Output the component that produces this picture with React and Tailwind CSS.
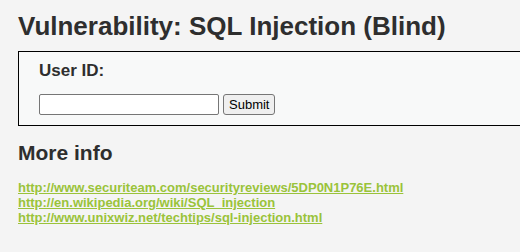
export default function App() {
  const links = [
    "http://www.securiteam.com/securityreviews/5DP0N1P76E.html",
    "http://en.wikipedia.org/wiki/SQL_injection",
    "http://www.unixwiz.net/techtips/sql-injection.html",
  ];

  return (
    <div className="w-[520px] h-[252px] overflow-hidden bg-[#f4f4f4] text-[#2e2e2e] font-['Liberation_Sans',Arial,sans-serif]">
      <div className="pl-[18px] pt-[10px]">
        <h1 className="text-[26px] leading-[32px] font-bold">
          Vulnerability: SQL Injection (Blind)
        </h1>

        <div className="mt-[9px] w-[560px] h-[75px] border border-black bg-[#f8f9f9] pl-[20px] pt-[9px]">
          <h3 className="text-[17px] leading-[20px] font-bold">User ID:</h3>
          <form className="mt-[13px] flex items-center gap-[4px]" onSubmit={(e) => e.preventDefault()}>
            <input
              type="text"
              className="w-[180px] h-[21px] border border-[#767676] rounded-[2px] bg-white text-[13px] px-[2px]"
            />
            <button
              type="submit"
              className="h-[21px] px-[5px] border border-[#767676] rounded-[3px] bg-[#efefef] text-[13px] leading-[19px] text-black"
            >
              Submit
            </button>
          </form>
        </div>

        <h2 className="mt-[14px] text-[21px] leading-[26px] font-bold">More info</h2>

        <ul className="mt-[14px] text-[13px] leading-[15px] font-bold">
          {links.map((l) => (
            <li key={l}>
              <a href="#" className="text-[#9ac33a] underline">
                {l}
              </a>
            </li>
          ))}
        </ul>
      </div>
    </div>
  );
}
